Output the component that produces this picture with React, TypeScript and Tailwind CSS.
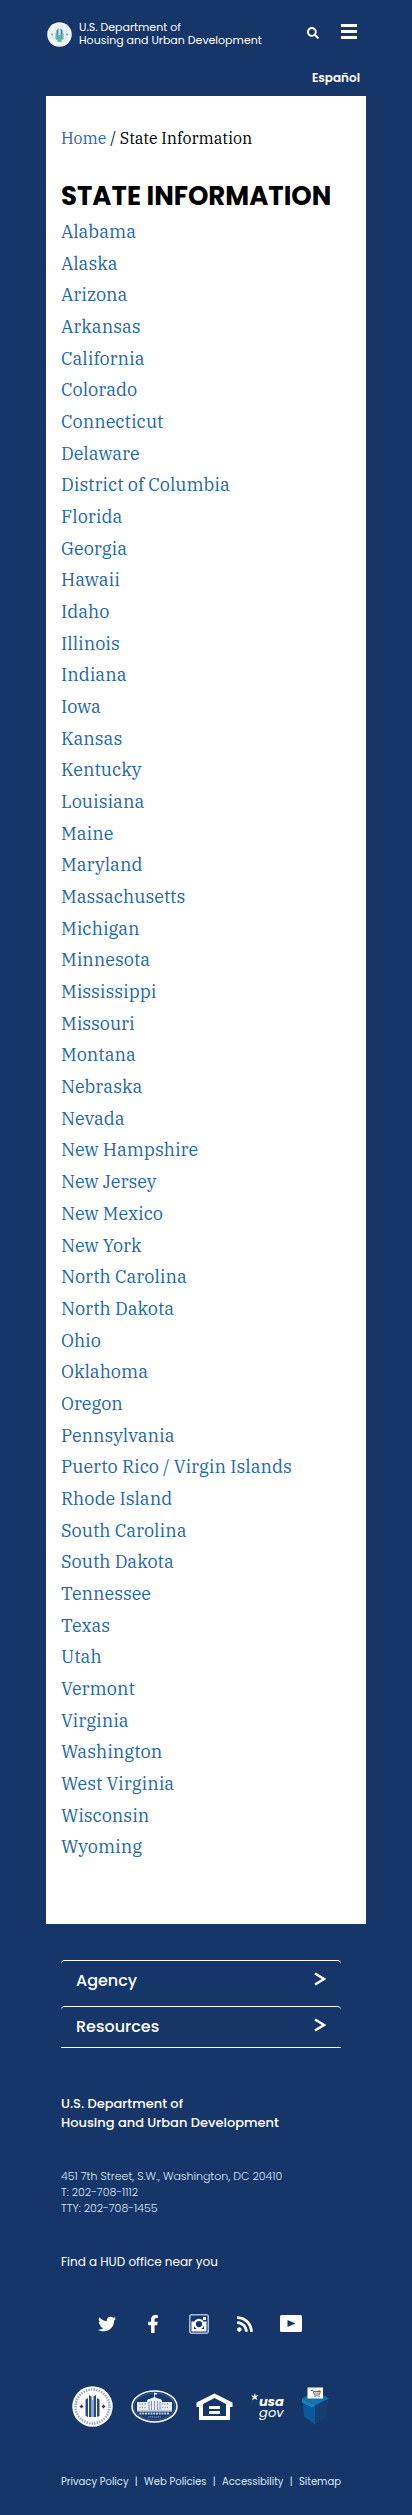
import React from 'react';
import { FaFacebookF, FaRss, FaSearch, FaTwitter } from 'react-icons/fa';

const states = [
  'Alabama', 'Alaska', 'Arizona', 'Arkansas', 'California', 'Colorado', 'Connecticut', 'Delaware',
  'District of Columbia', 'Florida', 'Georgia', 'Hawaii', 'Idaho', 'Illinois', 'Indiana', 'Iowa',
  'Kansas', 'Kentucky', 'Louisiana', 'Maine', 'Maryland', 'Massachusetts', 'Michigan', 'Minnesota',
  'Mississippi', 'Missouri', 'Montana', 'Nebraska', 'Nevada', 'New Hampshire', 'New Jersey',
  'New Mexico', 'New York', 'North Carolina', 'North Dakota', 'Ohio', 'Oklahoma', 'Oregon',
  'Pennsylvania', 'Puerto Rico / Virgin Islands', 'Rhode Island', 'South Carolina', 'South Dakota',
  'Tennessee', 'Texas', 'Utah', 'Vermont', 'Virginia', 'Washington', 'West Virginia', 'Wisconsin',
  'Wyoming',
];

function HeaderSeal() {
  return (
    <svg viewBox="0 0 50 50" className="size-[25px] shrink-0" aria-hidden="true">
      <circle cx="25" cy="25" r="24.5" fill="#f4f9fc" />
      <circle cx="25" cy="25" r="18" fill="#e6f3f6" />
      <path d="M19 17l4-5v24l-4-3zM31 17l-4-5v24l4-3z" fill="#3f87ad" />
      <path d="M17 23l3-2v16l-3-3zM33 23l-3-2v16l3-3zM21 26h8v14h-8z" fill="#62b7a8" />
      <circle cx="10" cy="25" r="1.8" fill="#4b96b5" />
      <circle cx="40" cy="25" r="1.8" fill="#4b96b5" />
    </svg>
  );
}

function HudSeal() {
  return (
    <svg viewBox="0 0 82 82" className="w-[41px] shrink-0" aria-hidden="true">
      <circle cx="41" cy="41" r="40.5" fill="#fff" />
      <circle cx="41" cy="41" r="34" fill="none" stroke="#5d74a0" strokeWidth="5" strokeDasharray="3 2.2" opacity=".65" />
      <circle cx="41" cy="41" r="28" fill="#fff" />
      <path d="M27 27l5-3v38l-5-2zM34 18l5 3v41h-5zM43 21l5-3v44h-5zM50 24l5 3v33l-5 2z" fill="#274b82" />
      <path d="M39 28h4v34h-4z" fill="#91a5c5" />
      <path d="M15 41l4-4 4 4-4 4zM59 41l4-4 4 4-4 4z" fill="#24467c" />
    </svg>
  );
}

function WhiteHouse() {
  return (
    <svg viewBox="0 0 94 66" className="w-[47px] shrink-0" aria-hidden="true">
      <ellipse cx="47" cy="33" rx="45" ry="31" fill="#173b71" stroke="#fff" strokeWidth="3" />
      <ellipse cx="47" cy="33" rx="41" ry="27" fill="none" stroke="#6680ab" strokeWidth="1" />
      <path d="M47 5v10" stroke="#fff" strokeWidth="1.500" />
      <path d="M47 6h5v3h-5z" fill="#fff" />
      <path d="M12 24h20v-4l15-6 15 6v4h20v17H12z" fill="#e9edf5" />
      <path d="M36 23v18M41 21v20M47 21v20M53 21v20M58 23v18" stroke="#8796b4" strokeWidth="2" />
      <path d="M17 28h15M17 35h15M62 28h15M62 35h15" stroke="#8393b3" strokeWidth="3" strokeDasharray="2 3" />
      <path d="M34 20h26M12 42h70" stroke="#fff" strokeWidth="2" />
      <path d="M17 47h60" stroke="#c5cfe2" strokeWidth="4" strokeDasharray="4 1.500" />
      <path d="M34 54h26" stroke="#8ba0c4" strokeWidth="2" strokeDasharray="3 1" />
    </svg>
  );
}

function EqualHousing() {
  return (
    <svg viewBox="0 0 74 56" className="w-[37px] shrink-0" aria-hidden="true">
      <path fillRule="evenodd" d="M37 1L73 19v9h-5v26H6V28H1v-9zM37 10L14 22v24h46V22z" fill="#fff" />
      <path d="M26 26h22v6H26zM26 36h22v6H26z" fill="#fff" />
    </svg>
  );
}

function UsaGov() {
  return (
    <span className="flex h-[30px] items-start text-white">
      <svg viewBox="0 0 8 8" className="mt-px size-2 shrink-0" aria-hidden="true">
        <path d="M4 0l.5 2.800L7.500 2 5.200 4.300 6.500 7 3.700 5.500 1 7.500l1-3L0 2.500l3 .2z" fill="#fff" />
      </svg>
      <span className="flex flex-col pt-1 text-[13px] italic leading-[11px]">
        <span className="font-bold">usa</span>
        <span>gov</span>
      </span>
    </span>
  );
}

function CartBox() {
  return (
    <svg viewBox="0 0 54 78" className="w-[27px] shrink-0" aria-hidden="true">
      <path d="M0 23l12-7h30l12 7-27 14z" fill="#1172ad" />
      <path d="M2 24l25 13v39L4 59z" fill="#09599b" />
      <path d="M52 24L27 37v39l23-17z" fill="#143f70" />
      <path d="M0 23l-1 8 22 10 6-4z" fill="#1981bb" />
      <path d="M11 1h31v22H11z" fill="#fff" />
      <path d="M18 7h4l3 9h9l3-7H23" fill="none" stroke="#58708d" strokeWidth="2" />
      <path d="M25 12h9M32 8l5-2" stroke="#d56643" strokeWidth="2" />
      <circle cx="26" cy="19" r="1.500" fill="#58708d" />
      <circle cx="34" cy="19" r="1.500" fill="#58708d" />
    </svg>
  );
}

function Instagram() {
  return (
    <svg viewBox="0 0 40 40" className="size-5" aria-hidden="true">
      <rect x="1.500" y="1.500" width="37" height="37" rx="4" fill="#163669" stroke="#a9bddb" strokeWidth="3" />
      <path d="M5 15h5v20H5zM30 15h5v20h-5zM5 30h30v5H5z" fill="#fff" />
      <circle cx="20" cy="20" r="8.500" fill="#163669" stroke="#fff" strokeWidth="4.500" />
      <path d="M28 6h6v6h-6z" fill="#fff" />
    </svg>
  );
}

function Youtube() {
  return (
    <svg viewBox="0 0 44 34" className="w-[22px]" aria-hidden="true">
      <rect width="44" height="34" rx="3" fill="#fff" />
      <path d="M15 10l16 7-16 7z" fill="#163669" />
    </svg>
  );
}

const social = [
  { label: 'Twitter', icon: <FaTwitter className="size-[18px]" /> },
  { label: 'Facebook', icon: <FaFacebookF className="size-[18px]" /> },
  { label: 'Instagram', icon: <Instagram /> },
  { label: 'RSS', icon: <FaRss className="size-[18px]" /> },
  { label: 'YouTube', icon: <Youtube /> },
];

const partners = [
  { label: 'HUD seal', icon: <HudSeal /> },
  { label: 'White House', icon: <WhiteHouse /> },
  { label: 'Equal housing', icon: <EqualHousing /> },
  { label: 'USA.gov', icon: <UsaGov /> },
  { label: 'HUD store', icon: <CartBox /> },
];

export default function App() {
  return (
    <div className="min-h-screen bg-[#163669] px-[46px] font-['Poppins','Inter',sans-serif] text-white">
      <header className="flex h-24 flex-col justify-between pt-[21px] pb-[10px]">
        <div className="flex items-start justify-between pr-[9px]">
          <a href="#home" className="flex items-center gap-[7px] pl-px text-[11px] leading-[13px]">
            <HeaderSeal />
            <span className="whitespace-nowrap">U.S. Department of<br />Housing and Urban Development</span>
          </a>
          <div className="flex items-end gap-[22px] pt-[3px]">
            <button type="button" aria-label="Search">
              <FaSearch className="size-3" />
            </button>
            <button type="button" aria-label="Menu" className="flex w-4 flex-col gap-[3px]">
              <span className="h-[3px] bg-white" />
              <span className="h-[3px] bg-white" />
              <span className="h-[3px] bg-white" />
            </button>
          </div>
        </div>
        <a href="#es" className="self-end pr-[6px] text-xs font-semibold">Español</a>
      </header>

      <main className="bg-white px-[15px] pb-[61px] pt-7 font-['IBM_Plex_Serif','Noto_Serif','Liberation_Serif',serif] text-black">
        <nav aria-label="Breadcrumb" className="text-base leading-7">
          <a href="#home" className="text-[#2467b3]">Home</a> / State Information
        </nav>
        <h1 className="mt-[26px] mb-[2px] whitespace-nowrap font-['Poppins','Inter',sans-serif] text-[26px] font-bold leading-9">STATE INFORMATION</h1>
        <ul className="text-lg leading-[1.76]">
          {states.map((s) => (
            <li key={s}><a href="#state" className="text-[#2467a9]">{s}</a></li>
          ))}
        </ul>
      </main>

      <footer className="pt-9 pr-[25px] pb-6 pl-[15px]">
        {['Agency', 'Resources'].map((s) => (
          <button key={s} type="button" className="mb-1 flex h-[42px] w-full items-center justify-between rounded-t border-t border-white px-[15px] text-base font-medium last-of-type:mb-0 last-of-type:border-b">
            {s}
            <svg viewBox="0 0 12 14" className="mb-1 h-[14px] w-3" fill="none" stroke="currentColor" strokeWidth="2.500" aria-hidden="true">
              <path d="M1 1.500l9 5.500-9 5.500" />
            </svg>
          </button>
        ))}
        <p className="mt-[46px] whitespace-nowrap text-[13px] font-medium leading-[19px]">U.S. Department of<br />Housing and Urban Development</p>
        <address className="mt-9 whitespace-nowrap text-[11px] font-light not-italic leading-4 text-[#dce7f7]">
          451 7th Street, S.W., Washington, DC 20410<br />T: 202-708-1112<br />TTY: 202-708-1455
        </address>
        <a href="#office" className="mt-9 block text-xs leading-5">Find a HUD office near you</a>
        <div className="mt-10 mr-1 flex h-6 justify-center">
          {social.map((s) => (
            <a key={s.label} href="#social" aria-label={s.label} className="flex w-[46px] items-center justify-center">{s.icon}</a>
          ))}
        </div>
        <div className="mt-[51px] flex h-10 items-center justify-between pr-3 pl-[11px]">
          {partners.map((s) => (
            <a key={s.label} href="#partner" aria-label={s.label}>{s.icon}</a>
          ))}
        </div>
        <nav aria-label="Policies" className="mt-[47px] flex justify-between whitespace-nowrap text-[10px] leading-4 text-[#dce7f7]">
          <a href="#privacy">Privacy Policy</a><span>|</span>
          <a href="#web">Web Policies</a><span>|</span>
          <a href="#access">Accessibility</a><span>|</span>
          <a href="#sitemap">Sitemap</a>
        </nav>
      </footer>
    </div>
  );
}
